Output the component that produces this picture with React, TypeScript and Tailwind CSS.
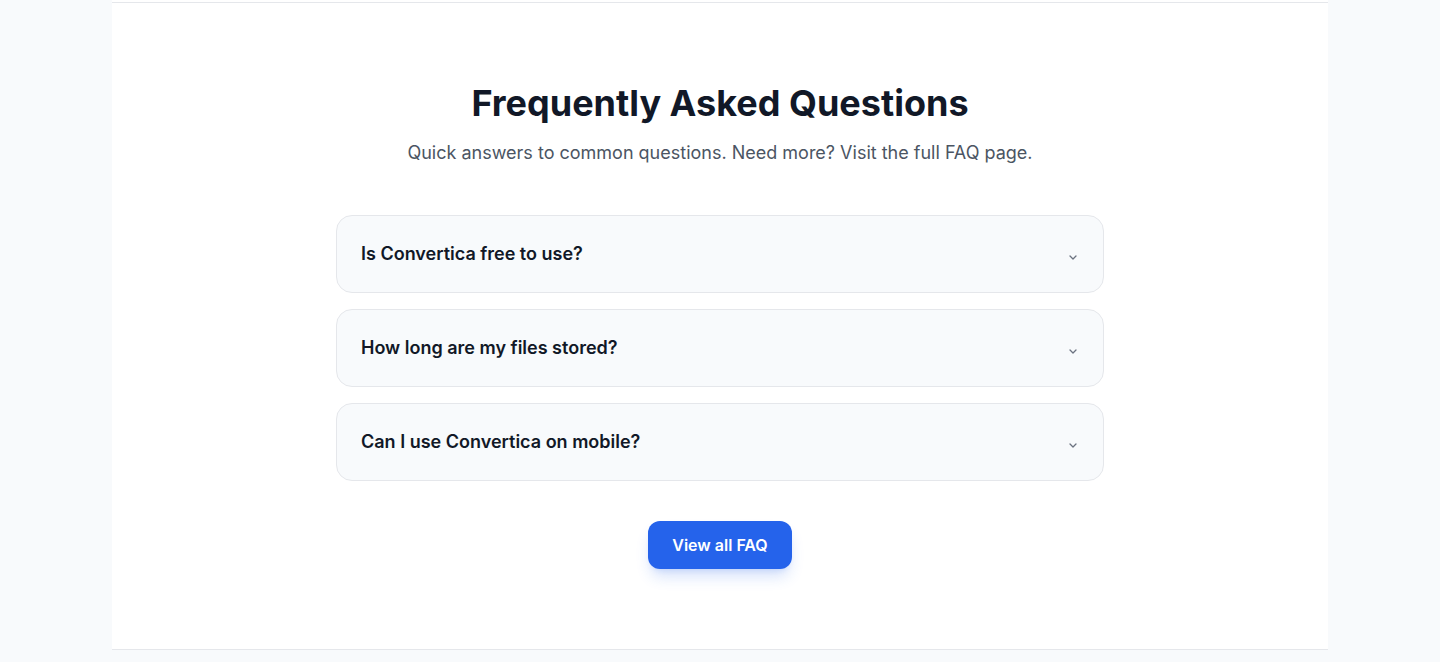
import React from 'react';

const faqs = [
  'Is Convertica free to use?',
  'How long are my files stored?',
  'Can I use Convertica on mobile?',
];

function Chevron() {
  return (
    <svg width="8" height="5" viewBox="0 0 8 5" fill="none" className="text-[#6b7280]">
      <path d="M1 1L4 4L7 1" stroke="currentColor" strokeWidth="1.3" strokeLinecap="round" strokeLinejoin="round" />
    </svg>
  );
}

export default function App() {
  return (
    <div className="min-h-screen bg-[#f8fafc]" style={{ fontFamily: 'Inter, "Noto Sans", sans-serif' }}>
      <div className="mx-auto w-[1216px] bg-white pt-[2px]">
        <section className="border-y border-[#e5e7eb] px-6 py-20">
          <div className="mx-auto max-w-3xl">
            <h2 className="text-center text-4xl font-bold leading-10 text-[#111827]">Frequently Asked Questions</h2>
            <p className="mt-4 text-center text-lg leading-7 text-[#4b5563]">
              Quick answers to common questions. Need more? Visit the full FAQ page.
            </p>
            <div className="mt-12 flex flex-col gap-4">
              {faqs.map((q) => (
                <div key={q} className="flex items-center justify-between rounded-2xl border border-[#e5e7eb] bg-[#f8fafc] px-6 py-6">
                  <span className="text-lg font-semibold leading-7 text-[#111827]">{q}</span>
                  <span className="mr-[2px] mt-[7px]"><Chevron /></span>
                </div>
              ))}
            </div>
            <div className="mt-10 flex justify-center">
              <button className="h-12 w-36 rounded-xl bg-[#2563eb] text-base font-semibold text-white shadow-lg shadow-[#2563eb]/20">
                View all FAQ
              </button>
            </div>
          </div>
        </section>
      </div>
    </div>
  );
}
